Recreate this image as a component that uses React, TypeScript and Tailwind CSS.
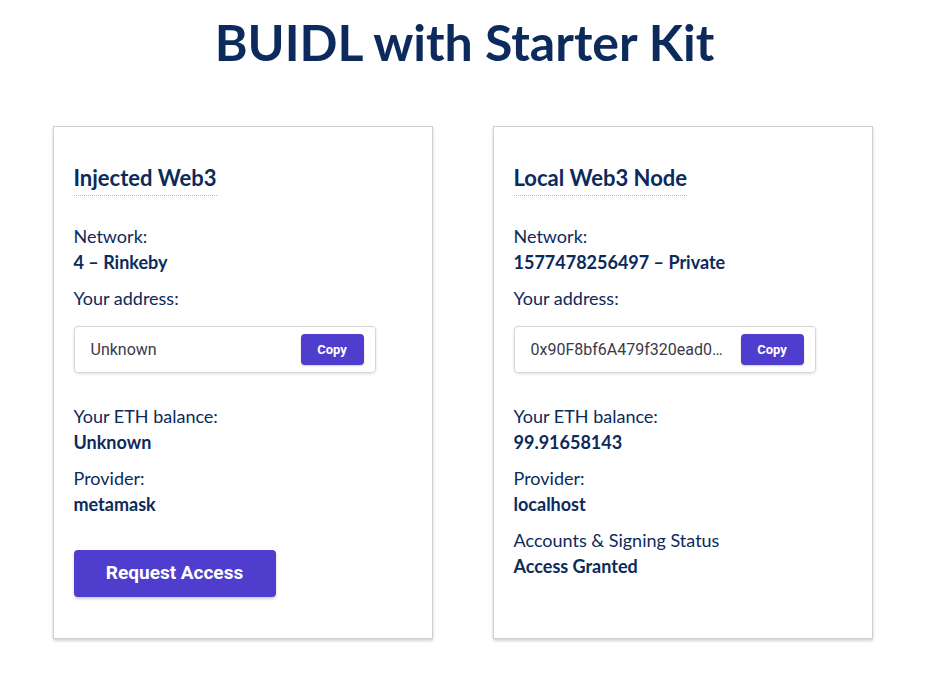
import React from 'react';

interface Field {
  label: string;
  value: string;
}

interface CardProps {
  title: string;
  network: string;
  address: string;
  balance: string;
  provider: string;
  extra?: Field;
  showRequest?: boolean;
}

const Row: React.FC<{ label: string; value: string; className?: string }> = ({ label, value, className }) => (
  <div className={className}>
    <div className="text-[18px] leading-[26px]">{label}</div>
    <div className="text-[18px] leading-[26px] font-bold">{value}</div>
  </div>
);

const Web3Card: React.FC<CardProps> = ({ title, network, address, balance, provider, extra, showRequest }) => (
  <div className="w-[380px] h-[513px] border border-[#cfcfcf] bg-white shadow-[0_2px_3px_rgba(0,0,0,0.18)] px-5 pt-[37px] text-[#0c2a5b]">
    <h2 className="inline-block text-[22px] leading-[28px] font-bold border-b border-dotted border-[#f3b63a] pb-[3px]">
      {title}
    </h2>

    <Row label="Network:" value={network} className="mt-[27px]" />
    <div className="mt-[10px] text-[18px] leading-[26px]">Your address:</div>

    {/* Address box */}
    <div className="mt-[15px] w-[302px] h-[47px] rounded border border-[#d6d6d6] shadow-[0_1px_3px_rgba(0,0,0,0.12)] flex items-center pl-4 pr-[11px] gap-3">
      <span className="flex-1 min-w-0 truncate text-[16px] text-[#3a3a4a] font-['Roboto',sans-serif]">{address}</span>
      <button className="w-[63px] h-[31px] shrink-0 rounded bg-[#4f3ece] text-white text-[13px] font-bold font-['Roboto',sans-serif] shadow-[0_1px_2px_rgba(0,0,0,0.2)]">
        Copy
      </button>
    </div>

    <Row label="Your ETH balance:" value={balance} className="mt-[30px]" />
    <Row label="Provider:" value={provider} className="mt-[10px]" />
    {extra && <Row label={extra.label} value={extra.value} className="mt-[10px]" />}

    {showRequest && (
      <button className="mt-[33px] w-[202px] h-[47px] rounded bg-[#4f3ece] text-white text-[19px] font-bold font-['Roboto',sans-serif] shadow-[0_2px_3px_rgba(0,0,0,0.2)]">
        Request Access
      </button>
    )}
  </div>
);

export default function App() {
  return (
    <div className="min-h-screen bg-white font-['Lato',sans-serif]">
      <h1 className="pt-[14px] text-center text-[50px] leading-[56px] font-bold text-[#0c2a5b]">
        BUIDL with Starter Kit
      </h1>

      <div className="mt-[56px] flex justify-center gap-[60px] pr-[4px]">
        <Web3Card
          title="Injected Web3"
          network="4 – Rinkeby"
          address="Unknown"
          balance="Unknown"
          provider="metamask"
          showRequest
        />
        <Web3Card
          title="Local Web3 Node"
          network="1577478256497 – Private"
          address="0x90F8bf6A479f320ead074411a4B0e7944Ea8c9C1"
          balance="99.91658143"
          provider="localhost"
          extra={{ label: 'Accounts & Signing Status', value: 'Access Granted' }}
        />
      </div>
    </div>
  );
}
